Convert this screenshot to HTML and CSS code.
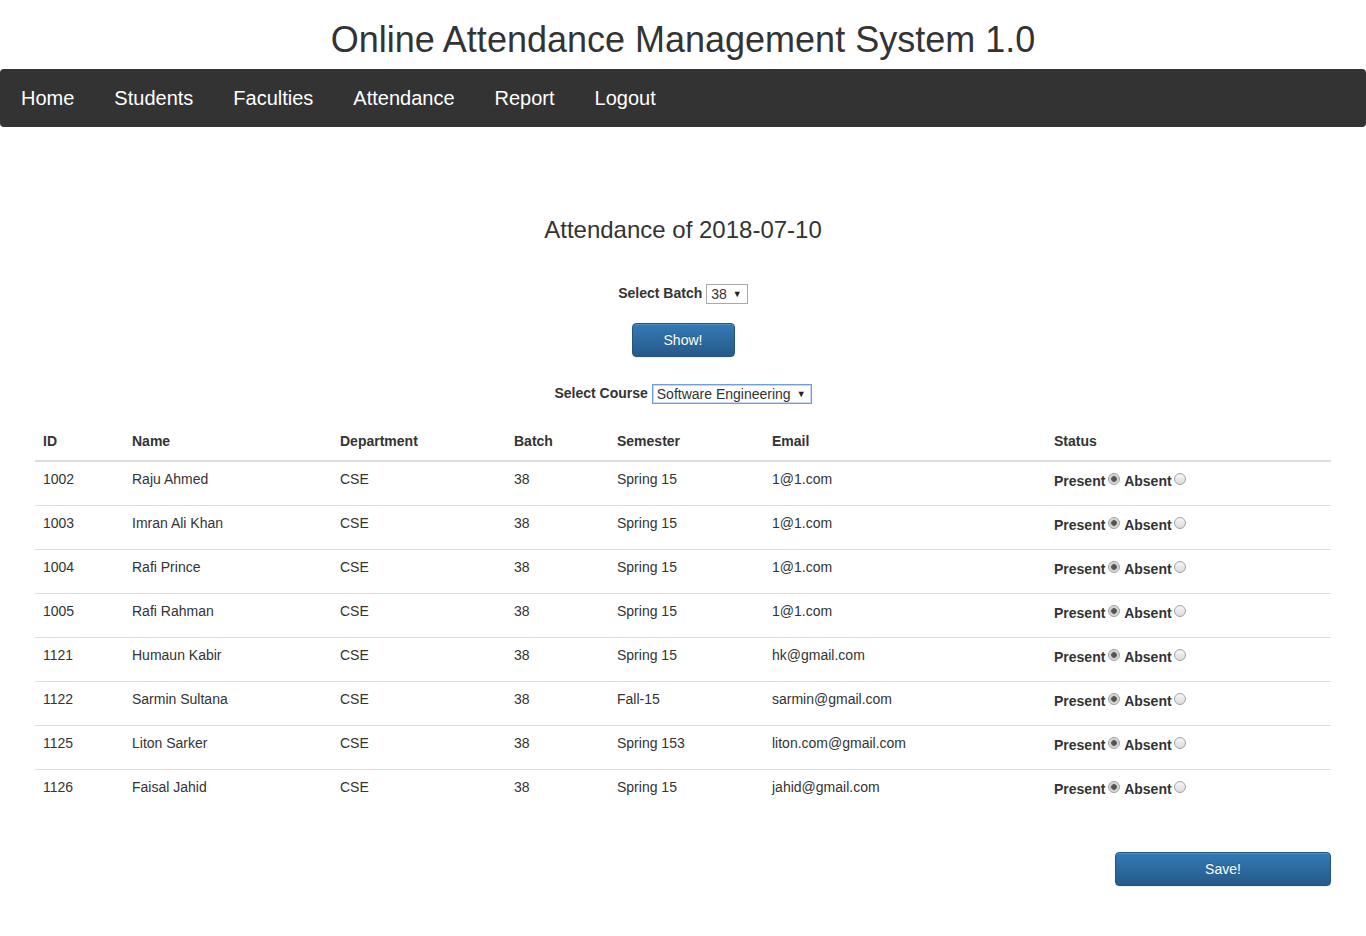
FILE: index.html
```html
<!DOCTYPE html>
<html>
<head>
<meta charset="utf-8">
<title>Online Attendance Management System 1.0</title>
<link rel="stylesheet" href="styles.css">
</head>
<body>
<header class="site-header">
  <h1 class="site-title">Online Attendance Management System 1.0</h1>
  <nav class="navbar">
    <a href="#">Home</a>
    <a href="#">Students</a>
    <a href="#">Faculties</a>
    <a href="#">Attendance</a>
    <a href="#">Report</a>
    <a href="#">Logout</a>
  </nav>
</header>
<main class="content">
  <h3 class="page-title">Attendance of 2018-07-10</h3>
  <div class="filter-row batch-row">
    <label class="filter-label">Select Batch</label>
    <span class="select-box"><span>38</span><span class="arrow">▼</span></span>
  </div>
  <div class="btn-row">
    <button class="btn btn-show">Show!</button>
  </div>
  <div class="filter-row course-row">
    <label class="filter-label">Select Course</label>
    <span class="select-box focused"><span>Software Engineering</span><span class="arrow">▼</span></span>
  </div>

  <table class="att-table">
    <colgroup>
      <col class="c-id"><col class="c-name"><col class="c-dept"><col class="c-batch"><col class="c-sem"><col class="c-email"><col class="c-status">
    </colgroup>
    <thead>
      <tr><th>ID</th><th>Name</th><th>Department</th><th>Batch</th><th>Semester</th><th>Email</th><th>Status</th></tr>
    </thead>
    <tbody>
      <tr><td>1002</td><td>Raju Ahmed</td><td>CSE</td><td>38</td><td>Spring 15</td><td>1@1.com</td><td class="status"><label>Present</label> <input type="radio" name="s1" checked> <label>Absent</label> <input type="radio" name="s1"></td></tr>
      <tr><td>1003</td><td>Imran Ali Khan</td><td>CSE</td><td>38</td><td>Spring 15</td><td>1@1.com</td><td class="status"><label>Present</label> <input type="radio" name="s2" checked> <label>Absent</label> <input type="radio" name="s2"></td></tr>
      <tr><td>1004</td><td>Rafi Prince</td><td>CSE</td><td>38</td><td>Spring 15</td><td>1@1.com</td><td class="status"><label>Present</label> <input type="radio" name="s3" checked> <label>Absent</label> <input type="radio" name="s3"></td></tr>
      <tr><td>1005</td><td>Rafi Rahman</td><td>CSE</td><td>38</td><td>Spring 15</td><td>1@1.com</td><td class="status"><label>Present</label> <input type="radio" name="s4" checked> <label>Absent</label> <input type="radio" name="s4"></td></tr>
      <tr><td>1121</td><td>Humaun Kabir</td><td>CSE</td><td>38</td><td>Spring 15</td><td>hk@gmail.com</td><td class="status"><label>Present</label> <input type="radio" name="s5" checked> <label>Absent</label> <input type="radio" name="s5"></td></tr>
      <tr><td>1122</td><td>Sarmin Sultana</td><td>CSE</td><td>38</td><td>Fall-15</td><td>sarmin@gmail.com</td><td class="status"><label>Present</label> <input type="radio" name="s6" checked> <label>Absent</label> <input type="radio" name="s6"></td></tr>
      <tr><td>1125</td><td>Liton Sarker</td><td>CSE</td><td>38</td><td>Spring 153</td><td>liton.com@gmail.com</td><td class="status"><label>Present</label> <input type="radio" name="s7" checked> <label>Absent</label> <input type="radio" name="s7"></td></tr>
      <tr><td>1126</td><td>Faisal Jahid</td><td>CSE</td><td>38</td><td>Spring 15</td><td>jahid@gmail.com</td><td class="status"><label>Present</label> <input type="radio" name="s8" checked> <label>Absent</label> <input type="radio" name="s8"></td></tr>
    </tbody>
  </table>

  <div class="save-row">
    <button class="btn btn-save">Save!</button>
  </div>
</main>
</body>
</html>
```

FILE: styles.css
```css
* { box-sizing: border-box; }

html, body {
  margin: 0;
  padding: 0;
  background: #fff;
  color: #333;
  font-family: "Liberation Sans", Arial, Helvetica, sans-serif;
  font-size: 14px;
  line-height: 1.42857;
}

.site-title {
  margin: 20px 0 9px;
  font-size: 36px;
  font-weight: 400;
  line-height: 40px;
  text-align: center;
  color: #333;
}

.navbar {
  display: flex;
  align-items: center;
  height: 58px;
  background: #333;
  border-radius: 4px;
  padding-left: 1px;
}

.navbar a {
  color: #fff;
  text-decoration: none;
  font-size: 20px;
  line-height: 58px;
  padding: 0 20px;
}

.content {
  padding: 0 35px 40px;
}

.page-title {
  margin: 90px 0 0;
  font-size: 24px;
  font-weight: 400;
  line-height: 1.1;
  text-align: center;
  color: #333;
}

.filter-row {
  display: flex;
  justify-content: center;
  align-items: center;
  gap: 4px;
}

.batch-row { margin-top: 41px; height: 20px; }

.filter-label {
  font-weight: 700;
  color: #333;
}

.select-box {
  display: inline-flex;
  align-items: center;
  gap: 6px;
  height: 20px;
  padding: 0 5px 0 4px;
  border: 1px solid #a9a9a9;
  background: #fff;
  color: #333;
  font-size: 14px;
  line-height: 18px;
}

.select-box.focused {
  border-color: #6f9fe0;
  box-shadow: 0 0 0 1px #c3d7f4 inset;
}

.select-box .arrow {
  font-size: 9px;
  line-height: 18px;
  color: #222;
}

.btn-row {
  display: flex;
  justify-content: center;
  margin-top: 19px;
}

.btn {
  height: 34px;
  border: 1px solid #245580;
  border-radius: 4px;
  background: linear-gradient(to bottom, #337ab7 0%, #265a88 100%);
  color: #fff;
  font-family: "Liberation Sans", Arial, sans-serif;
  font-size: 14px;
  text-shadow: 0 -1px 0 rgba(0,0,0,0.2);
  box-shadow: inset 0 1px 0 rgba(255,255,255,0.15), 0 1px 1px rgba(0,0,0,0.075);
  cursor: pointer;
}

.btn-show { width: 103px; }

.course-row { margin-top: 27px; height: 20px; }

.att-table {
  width: 100%;
  border-collapse: collapse;
  margin-top: 18px;
  table-layout: fixed;
}

.c-id { width: 89px; }
.c-name { width: 208px; }
.c-dept { width: 174px; }
.c-batch { width: 103px; }
.c-sem { width: 155px; }
.c-email { width: 282px; }
.c-status { width: 285px; }

.att-table th {
  text-align: left;
  font-weight: 700;
  padding: 8px;
  height: 39px;
  border-bottom: 2px solid #ddd;
  vertical-align: bottom;
}

.att-table td {
  padding: 8px;
  height: 44px;
  vertical-align: top;
  border-top: 1px solid #ddd;
}

.att-table td.status {
  padding-top: 10px;
  white-space: nowrap;
}

.status label {
  font-weight: 700;
}

.status input[type="radio"] {
  -webkit-appearance: none;
  appearance: none;
  width: 12px;
  height: 12px;
  margin: 0 0 0 -1px;
  border: 1px solid #a3a3a3;
  border-radius: 50%;
  background: linear-gradient(to bottom, #f6f6f6, #dcdcdc);
  vertical-align: 1px;
}

.status input[type="radio"]:checked {
  background: radial-gradient(circle, #4d4d4d 0, #5a5a5a 2.5px, #cfcfcf 3.2px, #e9e9e9 100%);
}

.save-row {
  display: flex;
  justify-content: flex-end;
  margin-top: 39px;
}

.btn-save { width: 216px; }
```
